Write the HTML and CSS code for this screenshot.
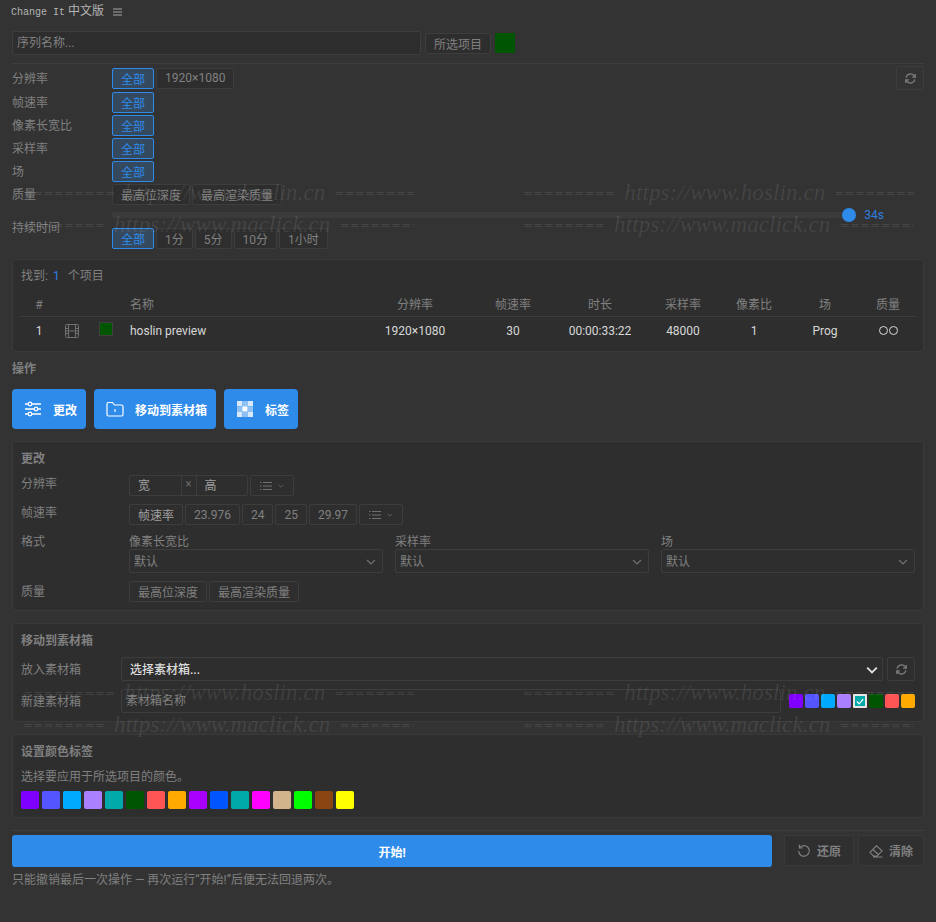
FILE: index.html
```html
<!DOCTYPE html>
<html lang="zh-CN">
<head>
  <meta charset="UTF-8">
  <title>Change It 中文版</title>
  <link rel="stylesheet" href="styles.css">
</head>
<body>
  <svg class="icon-defs" width="0" height="0">
    <symbol id="i-sync" viewBox="0 0 16 16">
      <path d="M2.600 7a5.500 5.500 0 0 1 9.600-2.700L13.500 6M13.400 9a5.500 5.500 0 0 1-9.600 2.700L2.500 10" fill="none" stroke="currentColor" stroke-width="1.500"/>
      <path d="M13.800 2.600v3.700h-3.700M2.200 13.400V9.700h3.700" fill="none" stroke="currentColor" stroke-width="1.500"/>
    </symbol>
    <symbol id="i-list" viewBox="0 0 12 10">
      <path d="M3 1.500h9M3 5h9M3 8.500h9M0 1.500h1.500M0 5h1.500M0 8.500h1.500" fill="none" stroke="currentColor" stroke-width="1"/>
    </symbol>
    <symbol id="i-down" viewBox="0 0 10 6">
      <path d="M1 1l4 4 4-4" fill="none" stroke="currentColor" stroke-width="1.200"/>
    </symbol>
  </svg>

  <div class="header">
    <span class="app-title"><span class="app-name">Change It</span> 中文版</span>
    <svg class="menu-icon" width="9" height="8" viewBox="0 0 9 8"><path d="M0 1h9M0 4h9M0 7h9" stroke="currentColor" fill="none"/></svg>
  </div>

  <div class="search-row">
    <input class="search-input" placeholder="序列名称...">
    <button class="btn">所选项目</button>
    <span class="search-swatch"></span>
  </div>

  <div class="filters">
    <div class="filter-row first">
      <span class="filter-label">分辨率</span>
      <button class="btn active">全部</button>
      <button class="btn">1920×1080</button>
      <button class="btn refresh-top"><svg width="13" height="13"><use href="#i-sync"/></svg></button>
    </div>
    <div class="filter-row"><span class="filter-label">帧速率</span><button class="btn active">全部</button></div>
    <div class="filter-row"><span class="filter-label">像素长宽比</span><button class="btn active">全部</button></div>
    <div class="filter-row"><span class="filter-label">采样率</span><button class="btn active">全部</button></div>
    <div class="filter-row"><span class="filter-label">场</span><button class="btn active">全部</button></div>
    <div class="filter-row">
      <span class="filter-label">质量</span>
      <button class="btn">最高位深度</button>
      <button class="btn">最高渲染质量</button>
    </div>
    <div class="filter-row duration">
      <span class="filter-label">持续时间</span>
      <div class="duration-body">
        <div class="slider">
          <div class="slider-track"></div>
          <div class="slider-thumb"></div>
          <span class="slider-value">34s</span>
        </div>
        <div class="btn-group">
          <button class="btn active">全部</button>
          <button class="btn">1分</button>
          <button class="btn">5分</button>
          <button class="btn">10分</button>
          <button class="btn">1小时</button>
        </div>
      </div>
    </div>
  </div>

  <div class="panel results">
    <div class="found">找到:<b>1</b>个项目</div>
    <div class="table-row table-head">
      <span>#</span><span></span><span></span>
      <span class="left">名称</span>
      <span>分辨率</span><span>帧速率</span><span>时长</span><span>采样率</span><span>像素比</span><span>场</span><span>质量</span><span></span>
    </div>
    <div class="table-row table-body">
      <span>1</span>
      <span class="film">
        <svg width="14" height="14" viewBox="0 0 14 14"><rect x="0.500" y="0.500" width="13" height="13" rx="1" fill="none" stroke="currentColor"/><path d="M3.500 1v12M10.500 1v12M1 4.500h2.500M1 7h2.500M1 9.500h2.500M10.500 4.500H13M10.500 7H13M10.500 9.500H13M3.500 7h7" fill="none" stroke="currentColor"/></svg>
      </span>
      <span class="row-swatch-cell"><i class="row-swatch"></i></span>
      <span class="left">hoslin preview</span>
      <span>1920×1080</span><span>30</span><span>00:00:33:22</span><span>48000</span><span>1</span><span>Prog</span>
      <span class="rings"><i></i><i></i></span><span></span>
    </div>
  </div>

  <div class="section-label">操作</div>
  <div class="actions">
    <button class="action-btn">
      <svg width="18" height="16" viewBox="0 0 18 16"><path d="M1 3h16M1 8h16M1 13h16" stroke="#fff" stroke-width="1.300" fill="none"/><circle cx="6" cy="3" r="1.800" fill="#2e8bea" stroke="#fff" stroke-width="1.300"/><circle cx="12" cy="8" r="1.800" fill="#2e8bea" stroke="#fff" stroke-width="1.300"/><circle cx="6" cy="13" r="1.800" fill="#2e8bea" stroke="#fff" stroke-width="1.300"/></svg>
      更改
    </button>
    <button class="action-btn">
      <svg width="18" height="16" viewBox="0 0 18 16"><path d="M1 3a1.500 1.500 0 0 1 1.500-1.500h4L8.500 4h7A1.500 1.500 0 0 1 17 5.500v8a1.500 1.500 0 0 1-1.500 1.500h-13A1.500 1.500 0 0 1 1 13.500z" fill="none" stroke="#fff" stroke-width="1.200"/><path d="M9 8v3" stroke="#fff" stroke-width="1.200"/></svg>
      移动到素材箱
    </button>
    <button class="action-btn">
      <svg width="18" height="16" viewBox="0 0 18 16">
        <rect x="1" y="0" width="5.300" height="5.300" fill="#d8e9fb"/><rect x="6.300" y="0" width="5.400" height="5.300" fill="#8fc1f4"/><rect x="11.700" y="0" width="5.300" height="5.300" fill="#d8e9fb"/>
        <rect x="1" y="5.300" width="5.300" height="5.400" fill="#8fc1f4"/><rect x="6.300" y="5.300" width="5.400" height="5.400" fill="#fff"/><rect x="11.700" y="5.300" width="5.300" height="5.400" fill="#8fc1f4"/>
        <rect x="1" y="10.700" width="5.300" height="5.300" fill="#d8e9fb"/><rect x="6.300" y="10.700" width="5.400" height="5.300" fill="#8fc1f4"/><rect x="11.700" y="10.700" width="5.300" height="5.300" fill="#d8e9fb"/>
      </svg>
      标签
    </button>
  </div>

  <div class="panel change">
    <div class="panel-title">更改</div>
    <div class="form-row first">
      <span class="form-label">分辨率</span>
      <div class="size-group">
        <input class="size-input" placeholder="宽">
        <span class="size-x">×</span>
        <input class="size-input" placeholder="高">
      </div>
      <button class="btn list-btn"><svg width="12" height="10"><use href="#i-list"/></svg><svg width="6" height="4"><use href="#i-down"/></svg></button>
    </div>
    <div class="form-row">
      <span class="form-label">帧速率</span>
      <button class="btn light">帧速率</button>
      <button class="btn">23.976</button>
      <button class="btn">24</button>
      <button class="btn">25</button>
      <button class="btn">29.97</button>
      <button class="btn list-btn"><svg width="12" height="10"><use href="#i-list"/></svg><svg width="6" height="4"><use href="#i-down"/></svg></button>
    </div>
    <div class="form-row format">
      <span class="form-label">格式</span>
      <div class="format-grid">
        <div class="format-field">
          <span class="field-label">像素长宽比</span>
          <div class="select">默认<svg width="10" height="6"><use href="#i-down"/></svg></div>
        </div>
        <div class="format-field">
          <span class="field-label">采样率</span>
          <div class="select">默认<svg width="10" height="6"><use href="#i-down"/></svg></div>
        </div>
        <div class="format-field">
          <span class="field-label">场</span>
          <div class="select">默认<svg width="10" height="6"><use href="#i-down"/></svg></div>
        </div>
      </div>
    </div>
    <div class="form-row center">
      <span class="form-label">质量</span>
      <button class="btn">最高位深度</button>
      <button class="btn">最高渲染质量</button>
    </div>
  </div>

  <div class="panel move">
    <div class="panel-title">移动到素材箱</div>
    <div class="bin-row first">
      <span class="bin-label">放入素材箱</span>
      <div class="select bin-select">选择素材箱...<svg width="12" height="8" viewBox="0 0 10 6"><path d="M1 1l4 4 4-4" fill="none" stroke="currentColor" stroke-width="1.600"/></svg></div>
      <button class="btn refresh-bin"><svg width="13" height="13"><use href="#i-sync"/></svg></button>
    </div>
    <div class="bin-row">
      <span class="bin-label">新建素材箱</span>
      <input class="bin-input" placeholder="素材箱名称">
      <div class="mini-swatches">
        <i style="background:#8000ff"></i><i style="background:#5555ff"></i><i style="background:#00aaff"></i><i style="background:#aa80ff"></i>
        <i class="checked" style="background:#00aaaa"><svg width="8" height="7" viewBox="0 0 10 8"><path d="M1 4l3 3 5-6" fill="none" stroke="#fff" stroke-width="1.500"/></svg></i>
        <i style="background:#005500"></i><i style="background:#ff5555"></i><i style="background:#ffaa00"></i>
      </div>
    </div>
  </div>

  <div class="panel colors">
    <div class="panel-title">设置颜色标签</div>
    <div class="colors-text">选择要应用于所选项目的颜色。</div>
    <div class="swatches">
      <i style="background:#8000ff"></i><i style="background:#5555ff"></i><i style="background:#00aaff"></i><i style="background:#aa80ff"></i>
      <i style="background:#00aaaa"></i><i style="background:#005500"></i><i style="background:#ff5555"></i><i style="background:#ffaa00"></i>
      <i style="background:#aa00ff"></i><i style="background:#0055ff"></i><i style="background:#00aaaa"></i><i style="background:#ff00ff"></i>
      <i style="background:#d2b48c"></i><i style="background:#00ff00"></i><i style="background:#8b4513"></i><i style="background:#ffff00"></i>
    </div>
  </div>

  <div class="footer">
    <button class="start-btn">开始!</button>
    <button class="side-btn undo">
      <svg width="14" height="14" viewBox="0 0 14 14"><path d="M3.200 3.200A5.300 5.300 0 1 1 1.700 7" fill="none" stroke="currentColor" stroke-width="1.200"/><path d="M2.400 0.800v3.100h3.100" fill="none" stroke="currentColor" stroke-width="1.200"/></svg>
      还原
    </button>
    <button class="side-btn clear">
      <svg width="14" height="14" viewBox="0 0 14 14"><path d="M0.900 8.300L7.400 1.800l5.700 5-4.900 5.200H4.400zM3.800 5.500l5.600 5M4 13h9.500" fill="none" stroke="currentColor" stroke-width="1.100"/></svg>
      清除
    </button>
  </div>
  <div class="note">只能撤销最后一次操作 — 再次运行“开始!”后便无法回退两次。</div>

  <!-- watermark from the capture tool, sits over everything -->
  <div class="wm wm-a"><span class="eq">=========</span><span class="url">https://www.hoslin.cn</span><span class="eq">=========</span></div>
  <div class="wm wm-b"><span class="eq">========</span><span class="url">https://www.maclick.cn</span><span class="eq">=========</span></div>
  <div class="wm wm-c"><span class="eq">=========</span><span class="url">https://www.hoslin.cn</span><span class="eq">=========</span></div>
  <div class="wm wm-d"><span class="eq">========</span><span class="url">https://www.maclick.cn</span><span class="eq">=========</span></div>
  <div class="wm wm-e"><span class="eq">=========</span><span class="url">https://www.hoslin.cn</span><span class="eq">=========</span></div>
  <div class="wm wm-f"><span class="eq">========</span><span class="url">https://www.maclick.cn</span><span class="eq">=========</span></div>
  <div class="wm wm-g"><span class="eq">=========</span><span class="url">https://www.hoslin.cn</span><span class="eq">=========</span></div>
  <div class="wm wm-h"><span class="eq">========</span><span class="url">https://www.maclick.cn</span><span class="eq">=========</span></div>
</body>
</html>
```

FILE: styles.css
```css
* {
  box-sizing: border-box;
}

body {
  position: relative;
  margin: 0;
  padding: 0 12px;
  height: 922px;
  overflow: hidden;
  background-color: #333333;
  color: #808080;
  font-family: Roboto, "Noto Sans CJK SC", sans-serif;
  font-size: 12px;
  line-height: 16px;
}

.icon-defs {
  position: absolute;
}

button, input {
  font-family: inherit;
  font-size: 12px;
}

input {
  outline: none;
  color: #808080;
}

input::placeholder {
  color: #808080;
  opacity: 1;
}

i {
  display: block;
}

/* header */
.header {
  display: flex;
  align-items: center;
  gap: 9px;
  height: 22px;
  padding-top: 2px;
  color: #b5b5b5;
}

.app-title {
  font-size: 12px;
}

.app-name {
  font-family: "Liberation Mono", monospace;
  font-size: 10px;
  margin-left: -1px;
}

.menu-icon {
  color: #a8a8a8;
  margin-top: -1px;
}

.search-row {
  display: flex;
  align-items: center;
  gap: 4px;
  height: 24px;
  margin-top: 9px;
}

.search-input {
  width: 409px;
  height: 24px;
  padding: 0 4px 0 4px;
  background-color: #2e2e2e;
  border: 1px solid #3d3d3d;
  border-radius: 2px;
}

.search-swatch {
  width: 20px;
  height: 20px;
  background-color: #005500;
}

/* buttons */
.btn {
  display: inline-flex;
  align-items: center;
  justify-content: center;
  height: 21px;
  padding: 0 8px;
  color: #808080;
  background-color: #2e2e2e;
  border: 1px solid #3d3d3d;
  border-radius: 2px;
}

.btn.active {
  color: #2e8bea;
  background-color: #34495e;
  border-color: #2e8bea;
}

.btn.light {
  color: #a0a0a0;
}

/* filters */
.filters {
  margin-top: 8px;
  padding-top: 2px;
  border-top: 1px solid #3d3d3d;
}

.filter-row {
  display: flex;
  align-items: center;
  gap: 2px;
  margin-top: 2px;
}

.filter-row.first {
  height: 24px;
  margin-top: 0;
}

.filter-label {
  width: 98px;
  padding-top: 1px;
}

.refresh-top {
  width: 28px;
  height: 24px;
  margin-left: auto;
  padding: 0;
  background-color: transparent;
}

.duration {
  align-items: center;
  margin-top: 7px;
}

.duration .filter-label {
  padding-bottom: 6px;
}

.duration-body {
  flex: 1;
}

.slider {
  display: flex;
  align-items: center;
  height: 6px;
  padding-right: 40px;
}

.slider-track {
  flex: 1;
  height: 6px;
  background-color: #3b3b3b;
  border-radius: 2px 0 0 2px;
}

.slider-thumb {
  flex: none;
  width: 14px;
  height: 14px;
  background-color: #2e8bea;
  border-radius: 50%;
}

.slider-value {
  margin-left: 8px;
  color: #2e7fe0;
}

.btn-group {
  display: flex;
  gap: 2px;
  margin-top: 10px;
}

/* panels */
.panel {
  background-color: #2e2e2e;
  border: 1px solid #3a3a3a;
  border-radius: 3px;
  padding: 8px;
}

.panel-title {
  height: 16px;
  padding-top: 1px;
  color: #808080;
  font-weight: 700;
}

.results {
  height: 93px;
  margin-top: 10px;
}

.found {
  height: 14px;
  padding-top: 1px;
  line-height: 14px;
}

.found b {
  margin: 0 8px 0 5px;
  color: #2e7fe0;
  font-weight: 400;
}

.table-row {
  display: grid;
  grid-template-columns: 36px 30px 36px 239px 106px 90px 84px 82px 60px 82px 44px 1fr;
  align-items: center;
  text-align: center;
}

.table-row .left {
  padding-left: 7px;
  text-align: left;
}

.table-head {
  height: 21px;
  margin-top: 14px;
  padding-bottom: 2px;
  border-bottom: 1px solid #3d3d3d;
}

.table-body {
  height: 27px;
  color: #d8d8d8;
}

.film {
  display: flex;
  justify-content: center;
  color: #707070;
}

.row-swatch-cell {
  padding-left: 12px;
}

.row-swatch {
  width: 14px;
  height: 14px;
  margin-top: -3px;
  background-color: #005500;
  border: 1px solid #3f3f3f;
}

.rings {
  display: flex;
  justify-content: center;
  gap: 1px;
}

.rings i {
  width: 9px;
  height: 9px;
  border: 1px solid #d8d8d8;
  border-radius: 50%;
}

.section-label {
  height: 16px;
  margin-top: 9px;
  color: #808080;
  font-weight: 700;
}

.actions {
  display: flex;
  gap: 8px;
  margin-top: 12px;
}

.action-btn {
  display: flex;
  align-items: center;
  gap: 11px;
  height: 40px;
  padding: 0 9px 0 12px;
  color: #ffffff;
  font-weight: 700;
  background-color: #2e8bea;
  border: none;
  border-radius: 4px;
}

/* change panel */
.change {
  height: 170px;
  margin-top: 12px;
}

.form-row {
  display: flex;
  gap: 2px;
  margin-top: 8px;
}

.form-row.first {
  margin-top: 9px;
}

.form-row.center {
  align-items: center;
}

.form-label {
  width: 106px;
  flex: none;
  padding-top: 1px;
}

.size-group {
  display: flex;
  align-items: center;
  width: 119px;
  height: 21px;
  background-color: #2e2e2e;
  border: 1px solid #3d3d3d;
  border-radius: 2px;
}

.size-input {
  flex: 1;
  width: 0;
  height: 19px;
  padding: 0 8px;
  color: #a0a0a0;
  background-color: transparent;
  border: none;
}

.size-input::placeholder {
  color: #a0a0a0;
}

.size-x {
  width: 16px;
  height: 19px;
  text-align: center;
  color: #666666;
  border-left: 1px solid #3d3d3d;
  border-right: 1px solid #3d3d3d;
}

.list-btn {
  gap: 6px;
  width: 44px;
  padding: 0;
  color: #707070;
}

.format-grid {
  flex: 1;
  display: grid;
  grid-template-columns: repeat(3, 1fr);
  gap: 12px;
}

.field-label {
  display: block;
  height: 16px;
  padding-top: 1px;
}

.select {
  display: flex;
  align-items: center;
  justify-content: space-between;
  height: 24px;
  padding: 1px 6px 0 4px;
  color: #808080;
  border: 1px solid #3d3d3d;
  border-radius: 2px;
  background-color: #2e2e2e;
}

.format-field svg {
  color: #707070;
}

/* move panel */
.move {
  height: 99px;
  margin-top: 12px;
}

.bin-row {
  display: flex;
  align-items: center;
  height: 24px;
  margin-top: 8px;
}

.bin-row.first {
  margin-top: 9px;
}

.bin-label {
  width: 100px;
  flex: none;
  padding-top: 1px;
}

.bin-select {
  flex: 1;
  padding: 1px 4px 0 8px;
  color: #dddddd;
  font-weight: 500;
}

.bin-select svg {
  color: #e0e0e0;
}

.refresh-bin {
  width: 28px;
  height: 24px;
  margin-left: 4px;
  padding: 0;
  background-color: transparent;
}

.bin-input {
  width: 660px;
  height: 24px;
  padding: 0 4px;
  background-color: #2e2e2e;
  border: 1px solid #3d3d3d;
  border-radius: 2px;
}

.mini-swatches {
  display: flex;
  gap: 2px;
  margin-left: auto;
}

.mini-swatches i {
  display: flex;
  align-items: center;
  justify-content: center;
  width: 14px;
  height: 14px;
  border-radius: 2px;
}

.mini-swatches i.checked {
  border: 2px solid #e6e6e6;
  border-radius: 1px;
}

/* colors panel */
.colors {
  height: 84px;
  margin-top: 12px;
}

.colors-text {
  height: 16px;
  margin-top: 10px;
}

.swatches {
  display: flex;
  gap: 3px;
  margin-top: 6px;
}

.swatches i {
  width: 18px;
  height: 18px;
  border-radius: 2px;
}

/* footer */
.footer {
  display: flex;
  align-items: flex-start;
  height: 37px;
  margin-top: 12px;
  padding-top: 4px;
  border-top: 1px solid #3d3d3d;
}

.start-btn {
  width: 760px;
  height: 32px;
  margin-right: 12px;
  color: #ffffff;
  font-weight: 700;
  background-color: #2e8bea;
  border: none;
  border-radius: 3px;
}

.side-btn {
  display: flex;
  align-items: center;
  justify-content: center;
  gap: 6px;
  height: 31px;
  padding: 0;
  color: #808080;
  font-weight: 700;
  background-color: #2f2f2f;
  border: 1px solid #3a3a3a;
  border-radius: 3px;
}

.undo {
  width: 70px;
  margin-right: 4px;
}

.clear {
  width: 66px;
}

.note {
  margin-top: 5px;
}

/* watermark overlay */
.wm {
  position: absolute;
  display: flex;
  align-items: center;
  gap: 9px;
  width: 391px;
  height: 28px;
  overflow: hidden;
  white-space: nowrap;
  pointer-events: none;
  color: rgba(255, 255, 255, 0.09);
}

.wm .eq {
  font-family: "DejaVu Sans", sans-serif;
  font-size: 12px;
  letter-spacing: 0.2px;
}

.wm .url {
  font-family: "Liberation Serif", serif;
  font-style: italic;
  font-size: 23px;
  letter-spacing: 0.1px;
}

.wm-a { left: 23px; top: 179px; }
.wm-b { left: 23px; top: 211px; }
.wm-c { left: 523px; top: 179px; }
.wm-d { left: 523px; top: 211px; }
.wm-e { left: 23px; top: 679px; }
.wm-f { left: 23px; top: 711px; }
.wm-g { left: 523px; top: 679px; }
.wm-h { left: 523px; top: 711px; }
```
